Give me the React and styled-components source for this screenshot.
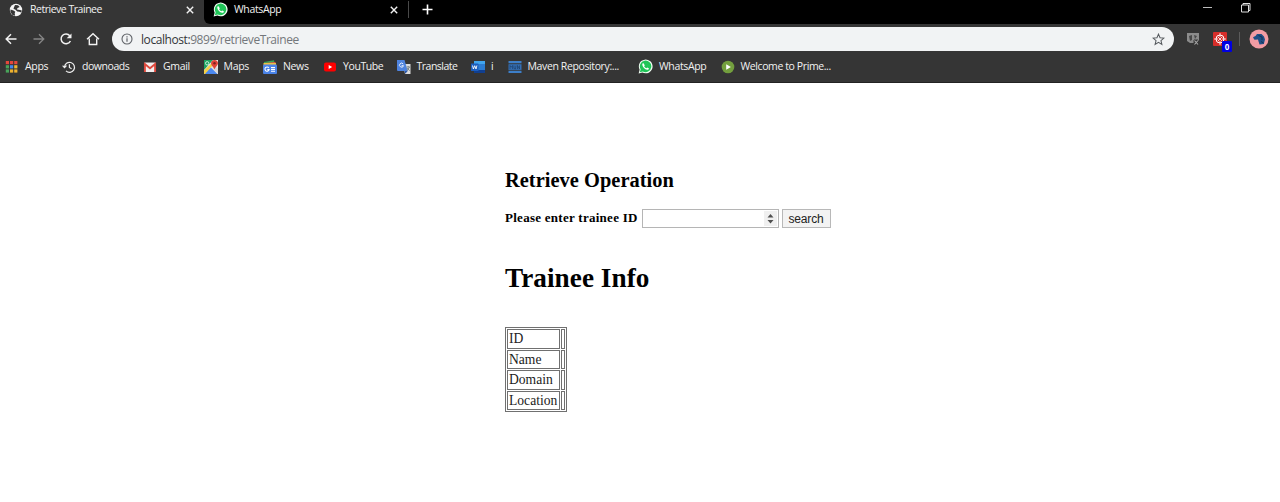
import React from "react";
import styled, { createGlobalStyle } from "styled-components";

const Global = createGlobalStyle`
  * { box-sizing: border-box; }
  body { margin: 0; background: #fff; overflow: hidden; }
`;
const Window = styled.div`
  width: 1280px; height: 502px; background: #fff;
  font-family: "Open Sans", "Noto Sans", sans-serif;
`;
const TabStrip = styled.div`
  display: flex; height: 24px; background: #000; padding-right: 29px;
`;
const Tab = styled.div`
  display: flex; align-items: center; height: 24px; padding-bottom: 5px;
  width: ${(p) => p.$w}px; padding-left: ${(p) => p.$pad}px; padding-right: 10px;
  background: ${(p) => (p.$active ? "#353535" : "#000")};
  border-bottom-left-radius: ${(p) => (p.$active ? 0 : 6)}px;
`;
const TabBack = styled.div`background: linear-gradient(90deg, #353535 20px, #000 20px);`;
const TabTitle = styled.span`
  font-size: 10.5px; line-height: 14px; color: #f2f2f2; white-space: nowrap; padding-bottom: 1px;
  letter-spacing: ${(p) => p.$ls || 0}px; margin-left: ${(p) => p.$gap || 7}px; flex: 1;
`;
const TabDivider = styled.i`width: 1px; height: 17px; background: #494949; margin-top: 1px;`;
const NewTab = styled.div`padding: 4px 0 0 13px; flex: 1; svg { display: block; }`;
const WindowButtons = styled.div`
  display: flex; gap: 28px; padding-top: 2px; svg { display: block; }
`;
const Toolbar = styled.div`
  display: flex; align-items: center; height: 30px; background: #353535; padding-left: 4px;
`;
const NavButton = styled.span`
  width: 14px; height: 14px; margin-right: ${(p) => p.$gap}px; color: ${(p) => (p.$dim ? "#858585" : "#f2f2f2")};
  svg { display: block; }
`;
const AddressBar = styled.div`
  display: flex; align-items: center; width: 1062px; height: 24px; border-radius: 12px;
  background: #f1f3f4; padding: 0 9px;
`;
const Url = styled.span`
  flex: 1; margin-left: 8px; padding-top: 2px; font-size: 12px; line-height: 18px; color: #74777b;
  letter-spacing: ${(p) => p.$ls}px; white-space: nowrap;
  b { font-weight: 400; color: #333639; }
`;
const Extensions = styled.div`
  display: flex; align-items: center; margin-left: 12px; svg { display: block; }
`;
const Ext = styled.span`position: relative; width: 14px; height: 14px; margin-right: ${(p) => p.$gap}px;`;
const Badge = styled.span`
  position: absolute; left: 9px; top: 9px; width: 10px; height: 11px; border-radius: 1px; background: #0000e0;
  color: #fff; font: 700 8px/11px "Open Sans", sans-serif; text-align: center;
`;
const ExtDivider = styled.i`width: 1px; height: 14px; background: #5b5b5b; margin-right: 9px;`;
const Bookmarks = styled.div`
  display: flex; align-items: center; height: 29px; background: #353535; border-bottom: 1px solid #222;
  padding: 0 0 3px 5px;
`;
const Bookmark = styled.div`
  display: flex; align-items: center; width: ${(p) => p.$w}px; flex: none;
  svg { display: block; flex: none; }
`;
const BookmarkName = styled.span`
  margin-left: 6px; font-size: 10.5px; line-height: 14px; color: #f2f2f2; white-space: nowrap;
  letter-spacing: ${(p) => p.$ls || 0}px; padding-bottom: 1px;
`;
const Page = styled.main`
  padding: 86px 0 0 505px; color: #000; font-family: "Liberation Serif", serif; font-size: 13.6px;
`;
const Heading2 = styled.h2`margin: 0; font-size: 20.4px; line-height: 23px; letter-spacing: .04px;`;
const Heading1 = styled.h1`margin: 34px 0 0; font-size: 27.2px; line-height: 32px; letter-spacing: .06px;`;
const Form = styled.div`display: flex; align-items: center; height: 19px; margin-top: 17px;`;
const Label = styled.label`
  width: 136.5px; padding-bottom: 2px; font-weight: 700; font-size: 13px; line-height: 17px;
  letter-spacing: .27px; white-space: nowrap;
`;
const NumberField = styled.div`
  width: 137px; height: 19px; border: 1px solid #b5b5b5; background: #fff; display: flex;
  justify-content: flex-end; padding: 1px;
`;
const Spinner = styled.span`width: 13px; height: 15px; background: #f0f0f0; svg { display: block; }`;
const Search = styled.button`
  width: 49px; height: 19px; margin-left: 3px; padding: 0; border: 1px solid #b8b8b8; background: #f3f3f3;
  color: #222; font: 12px/16px "Liberation Sans", sans-serif; letter-spacing: -.15px;
`;
const Info = styled.table`
  margin-top: 33px; border: 1px solid #707070; border-collapse: separate; border-spacing: 1px; table-layout: fixed;
  width: 62px; font-size: 13.6px; line-height: 16px; color: #1c1c1c;
`;
const Cell = styled.td`
  width: ${(p) => p.$w}px; height: ${(p) => p.$h}px; padding: 0 0 0 1px; border: 1px solid #707070; white-space: nowrap;
`;

const S = ({ s = 14, vb = "0 0 14 14", children }) => (
  <svg width={s} height={s} viewBox={vb} fill="none">{children}</svg>
);
const Close = () => (
  <S s={8} vb="0 0 8 8"><path d="M.8.8l6.4 6.4M7.2.8L.8 7.2" stroke="#f2f2f2" strokeWidth="1.4" /></S>
);
const Globe = () => (
  <S><circle cx="7" cy="7" r="6.2" fill="#f4f4f4" />
    <path d="M1.5 6.5l3 1 1.8 1.2-.6 1.5.4 2.5L3.5 12 1.4 9zM6 2.1l3 .2 1.7 1.8-2.2 1-.6 1.4L11 7l1.8.4-.5 2-2-.7-2-.2-1.800-1.700-2-1L5 4.200z" fill="#353535" /></S>
);
const WhatsApp = () => (
  <S s={15} vb="0 0 24 24">
    <path d="M1 23l1.6-6A11 11 0 1 1 7 21.500z" fill="#f3fff5" />
    <path d="M3 21l1.200-4.600A9.200 9.200 0 1 1 7.700 19.800z" fill="#20c558" />
    <path d="M8.400 6.500c-1 .3-1.800 1.500-1.500 3 .5 3.200 4 7 7.700 7.600 1.500.2 2.800-.7 3-2.100l-2.700-1.600-1.500 1.500c-1.600-.7-2.900-1.900-3.600-3.500l1.100-1.300z" fill="#fff" />
  </S>
);
const tileColors = ["#e4473b", "#e4473b", "#e4473b", "#48a45a", "#4589ef", "#eeb634", "#48a45a", "#edb12e", "#edb12e"];
const Apps = () => (
  <S>{tileColors.map((c, i) => <rect key={i} x={.8 + (i % 3) * 4.2} y={1 + Math.floor(i / 3) * 4.200} width="3.200" height="3.200" fill={c} />)}</S>
);
const History = () => (
  <S><path d="M2.500 7.200A5 5 0 1 1 4 10.900M.6 5.700l1.900 2 2-2M7.400 4.200v3.200l2.200 1.300" stroke="#ededed" strokeWidth="1.200" /></S>
);
const Gmail = () => (
  <S><rect x="1" y="2.500" width="12" height="9.500" rx="1" fill="#f4eeee" />
    <path d="M1.900 12V4L7 8.200 12.100 4v8" stroke="#dd493d" strokeWidth="1.900" /></S>
);
const MapsIcon = () => (
  <S><path d="M0 0h14v14H0z" fill="#e8e8e4" /><path d="M0 0h9L0 10z" fill="#1ea362" />
    <path d="M0 14l7-6.500 6.500 6.500z" fill="#4b88ef" /><path d="M0 10.500L9 2v3L1 14H0z" fill="#f4cf45" />
    <path d="M7.500 8l6.500 6V8l-3-1z" fill="#d8d8d8" />
    <path d="M10.500 0C8.500 0 7 1.500 7 3.300c0 2.200 2.600 3.700 3.500 6 .7-2.300 3.500-3.800 3.500-6C14 1.500 12.500 0 10.500 0z" fill="#df4438" />
    <circle cx="10.500" cy="3.300" r="1.200" fill="#7d231d" /><circle cx="3.200" cy="3.300" r="1.700" stroke="#e8fff0" strokeWidth=".8" /></S>
);
const NewsIcon = () => (
  <S><path d="M1 2l10-1.700 1 5H1z" fill="#37a456" /><path d="M2 3l10.500-1v4H2z" fill="#e65346" /><path d="M.5 3h12.500v3H.5z" fill="#edbd44" />
    <rect y="4.500" width="14" height="9.500" rx="1" fill="#4a83e8" />
    <path d="M5.800 7.900a2.100 2.100 0 1 0 .3 1.700H4.300M8 7.500h4M8 9.400h4M8 11.300h4" stroke="#fff" strokeWidth="1.100" /></S>
);
const YouTubeIcon = () => (
  <S><rect x="1" y="2.500" width="12" height="9" rx="2" fill="#f00" /><path d="M5.700 5l3.500 2-3.500 2z" fill="#fff" /></S>
);
const TranslateIcon = () => (
  <S><path d="M6 4h7.500v10H8z" fill="#dcdcdc" /><path d="M0 0h7.500l3.200 11H1Q0 11 0 10z" fill="#4e83df" />
    <path d="M6.200 4a2 2 0 1 0 .3 1.700H4.600" stroke="#e9f1ff" /><path d="M9.500 7h3.500M11.200 6v1M12.500 7L9.800 11M10.200 8l2.500 2.800" stroke="#6b777d" strokeWidth=".8" /><path d="M7.500 11h3.200L8.300 13.800z" fill="#2957aa" /></S>
);
const WordIcon = () => (
  <S><rect x="3" y="1" width="11" height="12" rx=".8" fill="#2b7cd3" /><path d="M3 1h11v3H3z" fill="#41a5ee" /><path d="M3 10h11v3H3z" fill="#103f91" />
    <rect y="3.500" width="7.500" height="7.500" rx=".6" fill="#1a5dbe" /><path d="M1.500 5.500l.9 3.500 1.300-3.300L5 9l.9-3.500" stroke="#fff" strokeWidth=".9" /></S>
);
const MavenIcon = () => (
  <S><path d="M.5 1h13v2.300H.5zM.5 10.800h13V13H.5z" fill="#3d7fc9" /><path d="M.5 4.200h13v5.700H.5z" fill="#346fb5" />
    <path d="M2 9V5.500l1.300 1.700 1.300-1.700V9M6 5.500v3l1.500.5.500-3.500M9.500 9V5.500l2 3.500V5.500" stroke="#1d3f69" strokeWidth=".7" /></S>
);
const PrimeIcon = () => (
  <S><circle cx="7" cy="7" r="6.300" fill="#739f3e" /><path d="M5.200 4.300l4.700 2.700-4.700 2.700z" fill="#fff" /></S>
);

const bookmarks = [
  ["Apps", Apps, 57, -0.3], ["downoads", History, 81, -0.45], ["Gmail", Gmail, 60.5, -0.35], ["Maps", MapsIcon, 59.5, -0.3],
  ["News", NewsIcon, 60, -0.35], ["YouTube", YouTubeIcon, 73.5, -0.4], ["Translate", TranslateIcon, 74.5, -0.5], ["i", WordIcon, 36.5, 0],
  ["Maven Repository:...", MavenIcon, 130.5, -0.38], ["WhatsApp", WhatsApp, 82.5, -0.35], ["Welcome to Prime...", PrimeIcon, 120, -0.4],
];
const rows = [["ID", 20], ["Name", 19], ["Domain", 20], ["Location", 19]];

export default function App() {
  return (
    <Window>
      <Global />
      <TabStrip>
        <Tab $active $w={204} $pad={9}><Globe /><TabTitle $ls={-0.48}>Retrieve Trainee</TabTitle><Close /></Tab>
        <TabBack><Tab $w={204} $pad={9}><WhatsApp /><TabTitle $ls={-0.35} $gap={6}>WhatsApp</TabTitle><Close /></Tab></TabBack>
        <TabDivider />
        <NewTab><S s={11} vb="0 0 11 11"><path d="M5.500.5v10M.5 5.500h10" stroke="#fff" strokeWidth="1.600" /></S></NewTab>
        <WindowButtons>
          <S s={10} vb="0 0 10 10"><path d="M1 5.500h9" stroke="#bbb" /></S>
          <S s={11} vb="0 0 11 11"><path d="M1.500 3h7v7h-7zM3 3V1.500h7v7H8.500" stroke="#ddd" /></S>
        </WindowButtons>
      </TabStrip>
      <Toolbar>
        <NavButton $gap={14}><S><path d="M12.500 7H2.500M7 2.200L2.200 7 7 11.800" stroke="currentColor" strokeWidth="1.500" /></S></NavButton>
        <NavButton $gap={13} $dim><S><path d="M1.500 7h10M7 2.200L11.800 7 7 11.800" stroke="currentColor" strokeWidth="1.300" /></S></NavButton>
        <NavButton $gap={13}><S><path d="M11.400 9A4.900 4.900 0 1 1 10.800 3.700" stroke="currentColor" strokeWidth="1.500" /><path d="M12.500 1.500v4.800H7.700z" fill="currentColor" /></S></NavButton>
        <NavButton $gap={12}><S><path d="M1 7.300L7 1.800l6 5.500M3.300 6.500v6h7.400v-6" stroke="currentColor" strokeWidth="1.400" /></S></NavButton>
        <AddressBar>
          <S s={12} vb="0 0 12 12"><circle cx="6" cy="6" r="5" stroke="#5f6368" strokeWidth="1.100" /><path d="M6 5.300v3.400M6 3.200v1.200" stroke="#5f6368" strokeWidth="1.200" /></S>
          <Url $ls={-0.43}><b>localhost:</b>9899/retrieveTrainee</Url>
          <S s={13}><path d="M7 1.200l1.650 3.900 4.200.35-3.200 2.750 1 4.100L7 10.100l-3.650 2.200 1-4.100-3.200-2.750 4.200-.35z" stroke="#55595d" strokeWidth="1.100" /></S>
        </AddressBar>
        <Extensions>
          <Ext $gap={13}><S><path d="M1 1h12v8h-3v2H4L1 9z" fill="#8b8b8b" /><path d="M3 4l3-1v5l-2 1zM8 3l3 1-2 3z" fill="#484848" /><path d="M8 8l4 4M12 8l-4 4" stroke="#353535" strokeWidth="2.800" /><path d="M8.500 8.500l3.500 4M12 8.500l-3.500 4" stroke="#aaa" strokeWidth="1.100" /></S></Ext>
          <Ext $gap={12}><S><rect width="14" height="14" rx="1" fill="#d72e2a" /><circle cx="7" cy="7" r="4" stroke="#fff" /><path d="M7 1v4M7 9v4M1 7h4M9 7h4M5 5l4 4M9 5L5 9" stroke="#fff" strokeWidth=".8" /></S><Badge>0</Badge></Ext>
          <ExtDivider />
          <S s={20} vb="0 0 20 20"><circle cx="10" cy="10" r="9.500" fill="#f39ca4" /><path d="M4 8.500Q4.500 7.500 6.500 7L8 5h4.500L15 7.500l1 3-1.200 4.500-4.300.5-.8-2.500L9 10.500 5.500 10.800z" fill="#204f86" /><path d="M9.500 6.500l3.500 1.500v3M12 12.500l2.500 1.500" stroke="#153154" /></S>
        </Extensions>
      </Toolbar>
      <Bookmarks>
        {bookmarks.map(([name, Icon, w, ls]) => (
          <Bookmark key={name} $w={w}><Icon /><BookmarkName $ls={ls}>{name}</BookmarkName></Bookmark>
        ))}
      </Bookmarks>
      <Page>
        <Heading2>Retrieve Operation</Heading2>
        <Form>
          <Label>Please enter trainee ID</Label>
          <NumberField><Spinner><S s={15} vb="0 0 15 15"><path d="M3.500 6.500L6.500 3l3 3.500zM3.500 9l3 3.500 3-3.500z" fill="#505050" /></S></Spinner></NumberField>
          <Search>search</Search>
        </Form>
        <Heading1>Trainee Info</Heading1>
        <Info><tbody>
          {rows.map(([name, h]) => <tr key={name}><Cell $w={53} $h={h}>{name}</Cell><Cell $w={4} $h={h} /></tr>)}
        </tbody></Info>
      </Page>
    </Window>
  );
}
